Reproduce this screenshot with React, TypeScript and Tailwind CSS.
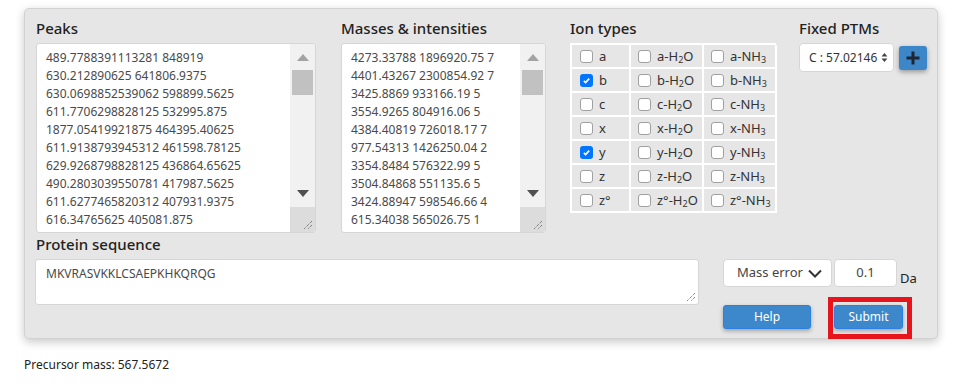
import React from "react";

const peaks = [
  "489.7788391113281 848919",
  "630.212890625 641806.9375",
  "630.0698852539062 598899.5625",
  "611.7706298828125 532995.875",
  "1877.05419921875 464395.40625",
  "611.9138793945312 461598.78125",
  "629.9268798828125 436864.65625",
  "490.2803039550781 417987.5625",
  "611.6277465820312 407931.9375",
  "616.34765625 405081.875",
];

const masses = [
  "4273.33788 1896920.75 7",
  "4401.43267 2300854.92 7",
  "3425.8869 933166.19 5",
  "3554.9265 804916.06 5",
  "4384.40819 726018.17 7",
  "977.54313 1426250.04 2",
  "3354.8484 576322.99 5",
  "3504.84868 551135.6 5",
  "3424.88947 598546.66 4",
  "615.34038 565026.75 1",
];

function Resize() {
  return (
    <svg width="10" height="10" viewBox="0 0 10 10" className="absolute right-[2px] bottom-[2px]">
      <path d="M9 1 L1 9 M9 5 L5 9" stroke="#555" strokeWidth="1" strokeDasharray="1 1" />
    </svg>
  );
}

function FakeTextarea({ lines, width }: { lines: string[]; width: string }) {
  return (
    <div className={`${width} h-[190px] bg-white border border-[#d6d6d6] rounded-[3px] flex overflow-hidden`}>
      <div className="flex-1 overflow-hidden pl-[9px] pt-[5px] text-[12px] leading-[18px] text-[#4a4a4a] whitespace-nowrap">
        {lines.map((l, i) => (
          <div key={i}>{l}</div>
        ))}
      </div>
      <div className="w-[25px] bg-[#f1f1f1] flex flex-col">
        <div className="h-[26px] flex items-center justify-center pt-[1px]">
          <svg width="12" height="7" viewBox="0 0 12 7">
            <path d="M6 0 L12 7 L0 7 Z" fill="#a3a3a3" />
          </svg>
        </div>
        <div className="mx-[2px] h-[25px] bg-[#c1c1c1]" />
        <div className="flex-1 flex items-end justify-center pb-[10px]">
          <svg width="12" height="7" viewBox="0 0 12 7">
            <path d="M0 0 L12 0 L6 7 Z" fill="#505050" />
          </svg>
        </div>
        <div className="relative h-[25px] bg-[#dcdcdc]">
          <Resize />
        </div>
      </div>
    </div>
  );
}

function Box({ checked }: { checked?: boolean }) {
  if (checked) {
    return (
      <span className="inline-flex w-[13px] h-[13px] rounded-[3px] bg-[#0075ff] items-center justify-center shrink-0">
        <svg width="9" height="9" viewBox="0 0 9 9">
          <path d="M1.8 4.8 L3.6 6.5 L7.2 2.6" stroke="white" strokeWidth="1.6" fill="none" />
        </svg>
      </span>
    );
  }
  return <span className="inline-block w-[13px] h-[13px] rounded-[3px] bg-white border border-[#a0a0a0] shrink-0" />;
}

function Sub({ children }: { children: React.ReactNode }) {
  return <span className="text-[9px] leading-none relative top-[2px]">{children}</span>;
}

function Ion({ base, suffix, checked }: { base: string; suffix?: "H2O" | "NH3"; checked?: boolean }) {
  return (
    <div className="flex items-center gap-[6px] text-[13px] text-[#333] leading-none">
      <Box checked={checked} />
      <span className="whitespace-nowrap">
        {base}
        {suffix === "H2O" && (
          <>
            -H<Sub>2</Sub>O
          </>
        )}
        {suffix === "NH3" && (
          <>
            -NH<Sub>3</Sub>
          </>
        )}
      </span>
    </div>
  );
}

const ionRows: { b: string; checked?: boolean }[] = [
  { b: "a" },
  { b: "b", checked: true },
  { b: "c" },
  { b: "x" },
  { b: "y", checked: true },
  { b: "z" },
  { b: "z°" },
];

export default function App() {
  return (
    <div className="relative font-['Noto_Sans',sans-serif] pt-[8px] pl-[24px] w-[956px] h-[384px] bg-white">
      <div className="w-[914px] h-[331px] bg-[#e6e6e6] border border-[#d2d2d2] rounded-[5px] shadow-[0_3px_10px_rgba(0,0,0,0.22)] pl-[11px] pt-[9px]">
        <div className="flex">
          <div className="w-[280px]">
            <div className="h-[20px] leading-[20px] mb-[5px] text-[15px] font-medium text-[#222]">Peaks</div>
            <FakeTextarea lines={peaks} width="w-[280px]" />
          </div>
          <div className="ml-[25px] w-[205px]">
            <div className="h-[20px] leading-[20px] mb-[5px] text-[15px] font-medium text-[#222] whitespace-nowrap">
              Masses &amp; intensities
            </div>
            <FakeTextarea lines={masses} width="w-[205px]" />
          </div>
          <div className="ml-[24px] w-[206px]">
            <div className="h-[20px] leading-[20px] mb-[5px] text-[15px] font-medium text-[#222]">Ion types</div>
            <div className="grid grid-cols-[59px_73px_73px] border-t-2 border-l-2 border-white w-[206px]">
              {ionRows.map((r) => (
                <React.Fragment key={r.b}>
                  <div className="h-[24px] border-r-2 border-b-2 border-white pl-[8px] flex items-center">
                    <Ion base={r.b} checked={r.checked} />
                  </div>
                  <div className="h-[24px] border-r-2 border-b-2 border-white pl-[7px] flex items-center">
                    <Ion base={r.b} suffix="H2O" />
                  </div>
                  <div className="h-[24px] border-r-2 border-b-2 border-white pl-[7px] flex items-center">
                    <Ion base={r.b} suffix="NH3" />
                  </div>
                </React.Fragment>
              ))}
            </div>
          </div>
          <div className="ml-[23px]">
            <div className="h-[20px] leading-[20px] mb-[5px] text-[15px] font-medium text-[#222] whitespace-nowrap">
              Fixed PTMs
            </div>
            <div className="flex items-start">
              <div className="w-[95px] h-[29px] bg-white border border-[#d6d6d6] rounded-[4px] flex items-center pl-[9px] pr-[5px]">
                <span className="w-[71px] overflow-hidden whitespace-nowrap text-[12px] text-[#333]">C : 57.02146</span>
                <svg width="7" height="11" viewBox="0 0 7 11" className="ml-[2px]">
                  <path d="M3.5 1 L6.5 4.5 L0.5 4.5 Z M3.5 10 L6.5 6.5 L0.5 6.5 Z" fill="#444" />
                </svg>
              </div>
              <div className="ml-[5px] mt-[3px] w-[28px] h-[24px] bg-[#3d87c9] rounded-[3px] shadow-[0_2px_5px_rgba(0,0,0,0.35)] flex items-center justify-center">
                <svg width="14" height="14" viewBox="0 0 14 14">
                  <path d="M7 0.5 V13.5 M0.5 7 H13.5" stroke="#1e2633" strokeWidth="3" />
                </svg>
              </div>
            </div>
          </div>
        </div>

        <div className="h-[20px] leading-[20px] mt-[1px] mb-[5px] text-[15px] font-medium text-[#222]">Protein sequence</div>
        <div className="flex">
          <div className="relative w-[664px] h-[46px] bg-white border border-[#d6d6d6] rounded-[3px] -ml-[1px] pl-[10px] pt-[5px] text-[12px] text-[#4a4a4a]">
            MKVRASVKKLCSAEPKHKQRQG
            <Resize />
          </div>
          <div className="ml-[24px]">
            <div className="flex items-end">
              <div className="w-[109px] h-[28px] bg-white border border-[#d6d6d6] rounded-[4px] flex items-center pl-[13px] pr-[9px] justify-between text-[13px] text-[#444]">
                <span>Mass error</span>
                <svg width="14" height="9" viewBox="0 0 14 9">
                  <path d="M1 1.5 L7 7.5 L13 1.5" stroke="#333" strokeWidth="2" fill="none" />
                </svg>
              </div>
              <div className="ml-[2px] w-[63px] h-[28px] bg-white border border-[#d6d6d6] rounded-[4px] flex items-center justify-center text-[13px] text-[#444]">
                0.1
              </div>
              <div className="ml-[3px] text-[13px] text-[#222] leading-[16px] mb-[1px]">Da</div>
            </div>
            <div className="flex mt-[18px]">
              <button className="w-[88px] h-[24px] bg-[#3d88ca] border border-[#2a80e4] rounded-[3px] text-white text-[12px] shadow-[0_2px_4px_rgba(0,0,0,0.3)]">
                Help
              </button>
              <button className="ml-[23px] w-[69px] h-[24px] bg-[#3d88ca] border border-[#2a80e4] rounded-[3px] text-white text-[12px] shadow-[0_2px_4px_rgba(0,0,0,0.3)]">
                Submit
              </button>
            </div>
          </div>
        </div>
      </div>
      <div className="mt-[18px] text-[12px] leading-[16px] text-[#222]">Precursor mass: 567.5672</div>
      <div className="absolute left-[828px] top-[297px] w-[84px] h-[42px] border-[5px] border-[#e8141c]" />
    </div>
  );
}
